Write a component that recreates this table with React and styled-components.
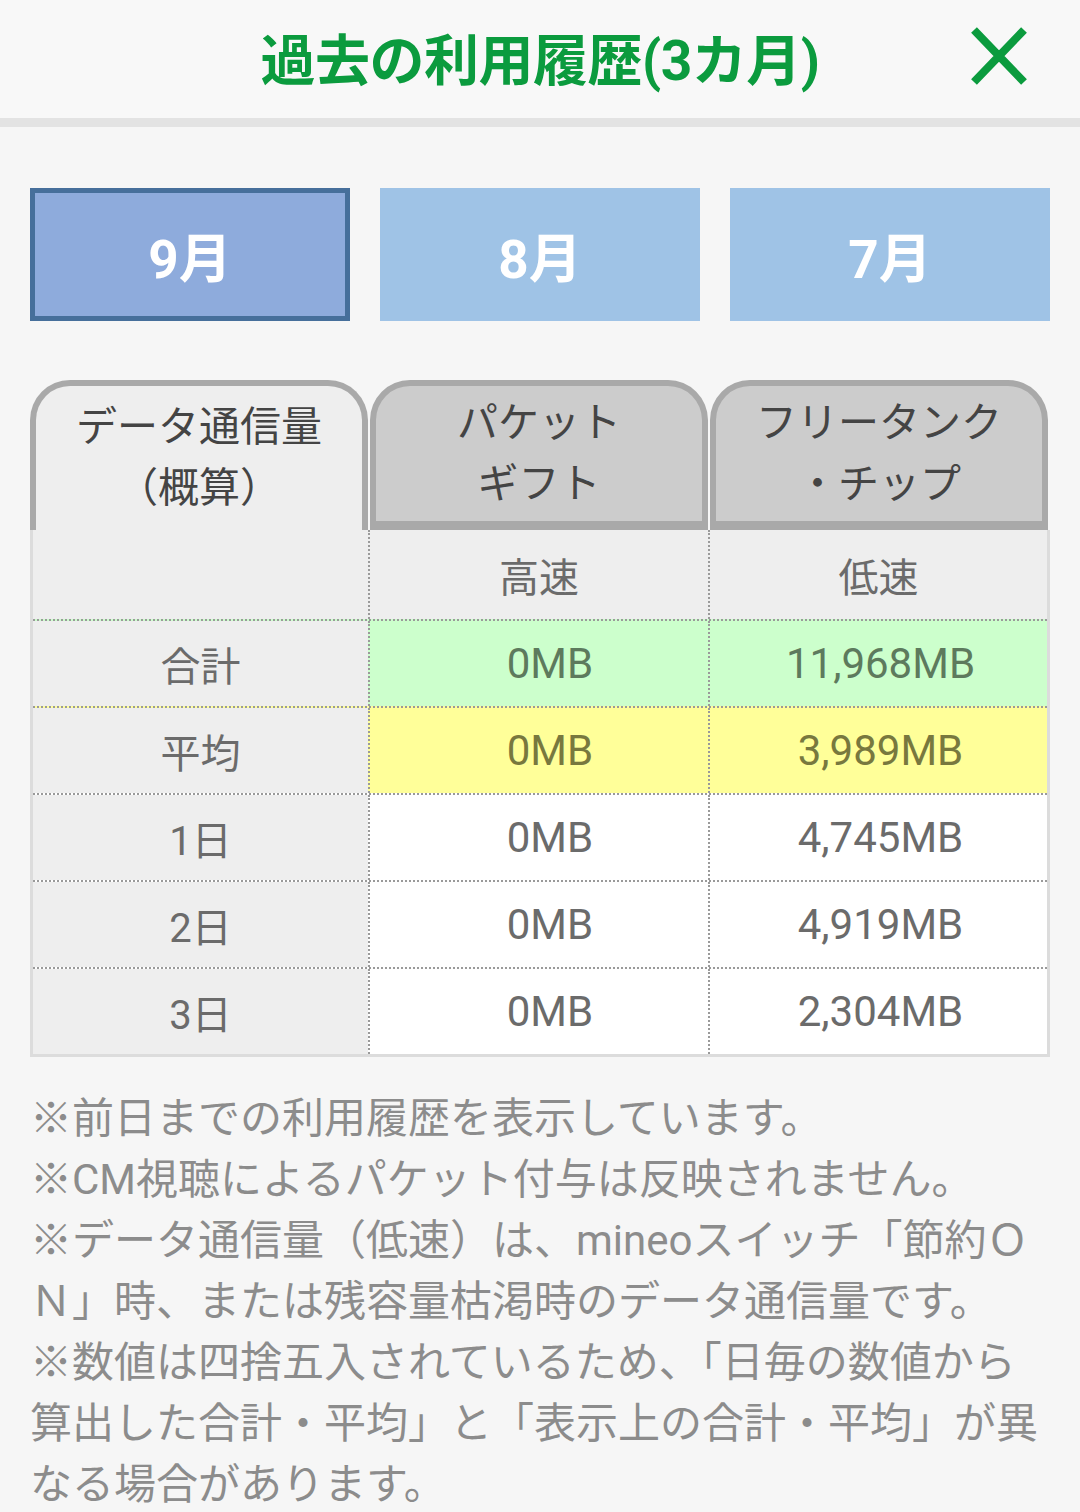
import React, { useState } from 'react';
import styled, { createGlobalStyle } from 'styled-components';

const GlobalStyle = createGlobalStyle`
  body {
    margin: 0;
    background-color: #f6f6f6;
    font-family: Roboto, 'Noto Sans CJK JP', sans-serif;
  }
`;

const Header = styled.header`
  display: grid;
  grid-template-columns: 1fr auto 1fr;
  align-items: center;
  height: 118px;
  background-color: #f8f8f8;
  border-bottom: 9px solid #e3e3e3;
`;

const Title = styled.h1`
  grid-column: 2;
  margin: 0 0 6px;
  font-size: 55px;
  font-weight: bold;
  color: #0b9b3e;
  letter-spacing: -0.5px;
`;

const CloseButton = styled.button`
  justify-self: end;
  margin: 0 52px 6px 0;
  padding: 0;
  width: 58px;
  height: 58px;
  border: none;
  background: transparent;
  cursor: pointer;
`;

const Main = styled.main`
  padding: 61px 30px 0;
`;

const MonthRow = styled.div`
  display: grid;
  grid-template-columns: repeat(3, 1fr);
  gap: 30px;
`;

const MonthButton = styled.button`
  height: 133px;
  border: ${(props) => (props.active ? '5px solid #466f9b' : 'none')};
  background-color: ${(props) => (props.active ? '#8eabdc' : '#9fc3e6')};
  color: #fff;
  font-family: Roboto, 'Noto Sans CJK JP', sans-serif;
  font-size: 53px;
  font-weight: bold;
  cursor: pointer;
`;

const TabRow = styled.div`
  display: grid;
  grid-template-columns: 338px 338px 338px;
  gap: 2px;
  margin-top: 59px;
`;

const Tab = styled.div`
  box-sizing: border-box;
  height: 150px;
  display: flex;
  align-items: center;
  justify-content: center;
  text-align: center;
  border: 6px solid #a9a9a9;
  border-bottom: ${(props) => (props.active ? 'none' : '9px solid #a9a9a9')};
  border-radius: 40px 40px 0 0;
  background-color: ${(props) => (props.active ? '#eeeeee' : '#cccccc')};
  color: #444;
  font-size: 41px;
  line-height: 61px;
`;

const Table = styled.div`
  width: 1020px;
  box-sizing: border-box;
  border: 3px solid #dcdcdc;
  border-top: none;
  background-color: #fff;
`;

const Row = styled.div`
  display: grid;
  grid-template-columns: 335px 340px 1fr;
  box-sizing: border-box;
  height: ${(props) => (props.head ? '89px' : '87px')};
  border-top: ${(props) => (props.head ? 'none' : '2px dotted #9a9a9a')};
  background-color: ${(props) => props.bg || '#fff'};
`;

const Cell = styled.div`
  display: flex;
  align-items: center;
  justify-content: center;
  font-size: 40px;
  color: ${(props) => props.color || '#6b6b6b'};
  & + & {
    border-left: 2px dotted #9a9a9a;
  }
`;

const ValueCell = styled(Cell)`
  font-size: 42px;
  padding-left: ${(props) => (props.shift ? '22px' : '4px')};
`;

const LabelCell = styled(Cell)`
  background-color: #eeeeee;
`;

const Notes = styled.div`
  margin-top: 31px;
  color: #8c8c8c;
  font-size: 42px;
  line-height: 61px;
  white-space: nowrap;
`;

const Note = styled.p`
  margin: 0;
`;

const months = ['9月', '8月', '7月'];

const rows = [
  { label: '合計', high: '0MB', low: '11,968MB', bg: '#ccffcc', color: '#5d7a5d' },
  { label: '平均', high: '0MB', low: '3,989MB', bg: '#ffff99', color: '#78783e' },
  { label: '1日', high: '0MB', low: '4,745MB' },
  { label: '2日', high: '0MB', low: '4,919MB' },
  { label: '3日', high: '0MB', low: '2,304MB' },
];

const CloseIcon = () => (
  <svg width="58" height="58" viewBox="0 0 58 58">
    <path d="M4 3 L54 55 M54 3 L4 55" stroke="#0b9b3e" strokeWidth="8" fill="none" />
  </svg>
);

const App = () => {
  const [month, setMonth] = useState(0);

  return (
    <>
      <GlobalStyle />
      <Header>
        <Title>過去の利用履歴(3カ月)</Title>
        <CloseButton aria-label="閉じる">
          <CloseIcon />
        </CloseButton>
      </Header>
      <Main>
        <MonthRow>
          {months.map((m, i) => (
            <MonthButton key={m} active={i === month} onClick={() => setMonth(i)}>
              {m}
            </MonthButton>
          ))}
        </MonthRow>

        <TabRow>
          <Tab active>
            データ通信量
            <br />
            （概算）
          </Tab>
          <Tab>
            パケット
            <br />
            ギフト
          </Tab>
          <Tab>
            フリータンク
            <br />
            ・チップ
          </Tab>
        </TabRow>

        <Table>
          <Row head bg="#eeeeee">
            <LabelCell />
            <Cell>高速</Cell>
            <Cell>低速</Cell>
          </Row>
          {rows.map((r) => (
            <Row key={r.label} bg={r.bg}>
              <LabelCell>{r.label}</LabelCell>
              <ValueCell shift color={r.color}>{r.high}</ValueCell>
              <ValueCell color={r.color}>{r.low}</ValueCell>
            </Row>
          ))}
        </Table>

        <Notes>
          <Note>※前日までの利用履歴を表示しています。</Note>
          <Note>※CM視聴によるパケット付与は反映されません。</Note>
          <Note>
            ※データ通信量（低速）は、mineoスイッチ「節約Ｏ
            <br />
            Ｎ」時、または残容量枯渇時のデータ通信量です。
          </Note>
          <Note>
            ※数値は四捨五入されているため、「日毎の数値から
            <br />
            算出した合計・平均」と「表示上の合計・平均」が異
            <br />
            なる場合があります。
          </Note>
        </Notes>
      </Main>
    </>
  );
};

export default App;
